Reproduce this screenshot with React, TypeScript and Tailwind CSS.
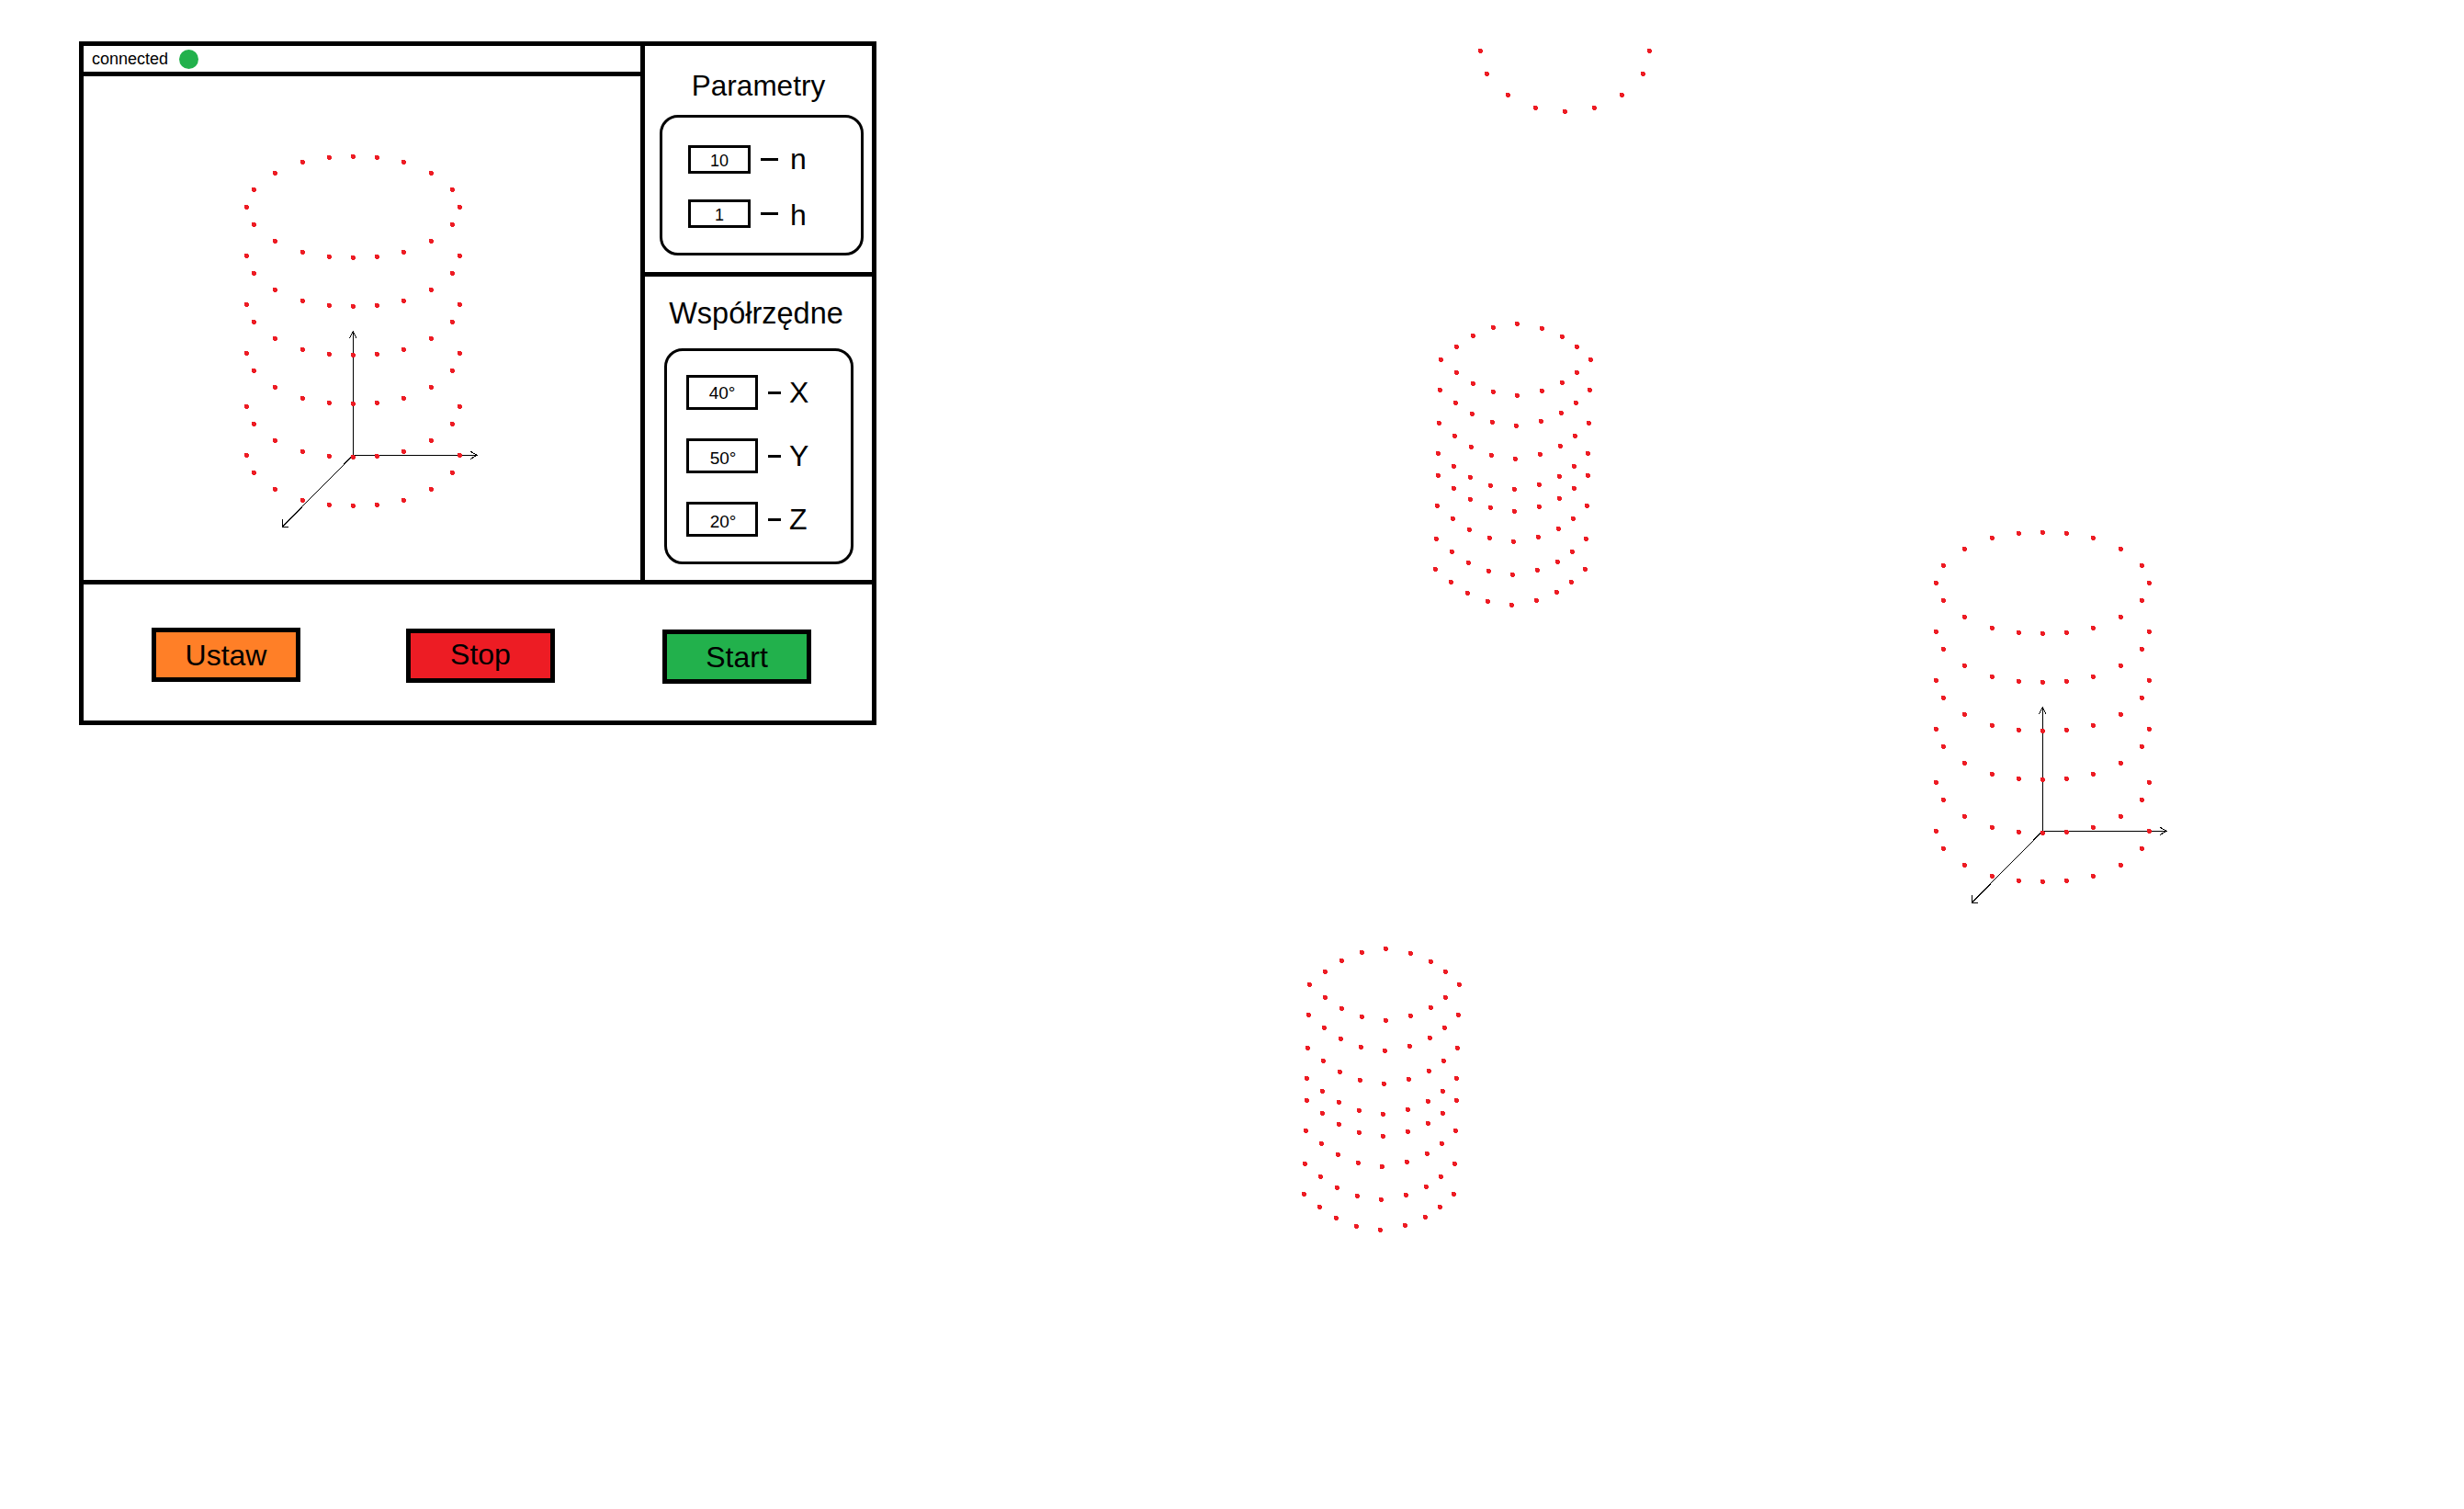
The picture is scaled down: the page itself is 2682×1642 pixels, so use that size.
const RED = "#ed1c24";

// lower half of a ring, measured from its leftmost dot
const LOWER: [number, number][] = [
  [0, 0], [17, 14], [35, 26], [57, 35], [83, 39], [110, 34], [132, 25], [148, 14], [163, 0],
];
const UPPER: [number, number][] = [
  [17, -14], [35, -26], [57, -35], [83, -39], [110, -34], [132, -25], [148, -14],
];
const TILT_RINGS: [number, number][] = [
  [0, 0], [-1, 33], [-2, 69], [-3, 102], [-3, 126], [-4, 159], [-5, 195], [-6, 228],
];

// straight cylinder with 20 dots per ring
const STRAIGHT_X = [-116, -108, -85, -55, -26, 0, 26, 55, 85, 108, 116];
const STRAIGHT_Y = [0, 19, 37, 49, 54, 55, 54, 49, 37, 19, 0];
const STRAIGHT_UP_X = [-108, -85, -55, -26, 0, 26, 55, 85, 108];
const STRAIGHT_UP_Y = [-19, -37, -49, -54, -55, -54, -49, -37, -19];
const STRAIGHT_RINGS = [0, 53, 106, 159, 217, 270];

const ARC: [number, number][] = [
  [1611.3, 55.3], [1618.3, 80.3], [1641.3, 103.3], [1671.3, 117.3], [1703.3, 121.3],
  [1735.3, 117.3], [1765.3, 103.3], [1788.3, 80.3], [1795.3, 55.3],
];

function Dot({ x, y }: { x: number; y: number }) {
  return <circle cx={x} cy={y} r={2.7} fill={RED} shapeRendering="crispEdges" />;
}

function Axes({ x, y }: { x: number; y: number }) {
  return (
    <g fill="none" stroke="#000" strokeWidth={1} shapeRendering="crispEdges">
      <path d={`M${x} ${y}V${y - 135}M${x - 4} ${y - 127}L${x} ${y - 135}L${x + 4} ${y - 127}`} />
      <path d={`M${x} ${y}H${x + 135}M${x + 128} ${y - 4}L${x + 135} ${y}L${x + 128} ${y + 4}`} />
      <path d={`M${x} ${y}L${x - 77} ${y + 78}M${x - 77} ${y + 70}V${y + 78}H${x - 70}`} />
    </g>
  );
}

function StraightCylinder({ x, y }: { x: number; y: number }) {
  return (
    <g>
      <Axes x={x} y={y + 270} />
      {STRAIGHT_UP_X.map((dx, i) => (
        <Dot key={`u${i}`} x={x + dx} y={y + STRAIGHT_UP_Y[i]} />
      ))}
      {STRAIGHT_RINGS.map((ring) =>
        STRAIGHT_X.map((dx, i) => <Dot key={`${ring}-${i}`} x={x + dx} y={y + ring + STRAIGHT_Y[i]} />)
      )}
    </g>
  );
}

function TiltedCylinder({ x, y }: { x: number; y: number }) {
  return (
    <g>
      {UPPER.map(([dx, dy], i) => (
        <Dot key={`u${i}`} x={x + dx} y={y + dy} />
      ))}
      {TILT_RINGS.map(([rx, ry]) =>
        LOWER.map(([dx, dy], i) => <Dot key={`${ry}-${i}`} x={x + rx + dx} y={y + ry + dy} />)
      )}
    </g>
  );
}

function Field({
  value,
  name,
  wide,
  valueClass = "",
  nameClass = "",
}: {
  value: string;
  name: string;
  wide?: boolean;
  valueClass?: string;
  nameClass?: string;
}) {
  return (
    <div className="flex items-center">
      <div
        className={`flex items-center justify-center border-[3px] border-black leading-none ${
          wide ? "h-[38px] w-[78px] text-[19px]" : "h-[31px] w-[68px] text-[18px]"
        } ${valueClass}`}
      >
        {value}
      </div>
      <div className={wide ? "ml-[11px] h-[3px] w-[14px] bg-black" : "ml-[11px] h-[3px] w-[19px] bg-black"} />
      <span className={`leading-none ${wide ? "ml-[9px] text-[32px]" : "ml-[13px] text-[32px]"} ${nameClass}`}>
        {name}
      </span>
    </div>
  );
}

function ActionButton({ label, color, className }: { label: string; color: string; className: string }) {
  return (
    <button
      type="button"
      className={`flex h-[59px] w-[162px] items-center justify-center border-[5px] border-black text-[32px] leading-none text-black ${color} ${className}`}
    >
      {label}
    </button>
  );
}

export default function App() {
  return (
    <div className="flex h-[1642px] w-[2682px] overflow-hidden bg-white font-['Liberation_Sans',Arial,sans-serif] text-black">
      <div className="mt-[45px] ml-[86px] flex h-[744px] w-[868px] shrink-0 flex-col self-start border-[5px] border-black">
        <div className="flex h-[581px]">
          {/* podgląd */}
          <div className="flex w-[611px] flex-col border-r-[5px] border-black">
            <div className="flex h-[33px] items-center border-b-[5px] border-black pl-[9px]">
              <span className="text-[18px] leading-none">connected</span>
              <span className="ml-[12px] h-[21px] w-[21px] rounded-full bg-[#22b14c]" />
            </div>
            <div className="flex-1">
              <svg className="block h-full w-full" viewBox="91 83 606 548">
                <StraightCylinder x={384.3} y={225.3} />
              </svg>
            </div>
          </div>

          {/* parametry i współrzędne */}
          <div className="flex w-[247px] flex-col">
            <div className="h-[251px] border-b-[5px] border-black pt-[25px]">
              <h2 className="h-[36px] text-center text-[31.5px] leading-[36px] font-normal">Parametry</h2>
              <div className="mt-[14px] ml-[16px] flex h-[153px] w-[222px] flex-col gap-[27px] rounded-[20px] border-[3px] border-black pt-[29px] pl-[28px]">
                <Field value="10" name="n" valueClass="pt-[4px]" />
                <Field value="1" name="h" valueClass="pt-[3px]" nameClass="translate-y-[2px]" />
              </div>
            </div>
            <div className="flex-1 pt-[22px]">
              <h2 className="h-[36px] pr-[5px] text-center text-[32.5px] leading-[36px] font-normal">Współrzędne</h2>
              <div className="mt-[20px] ml-[21px] flex h-[235px] w-[206px] flex-col gap-[31px] rounded-[20px] border-[3px] border-black pt-[26px] pl-[21px]">
                <Field wide value="40°" name="X" />
                <Field wide value="50°" name="Y" valueClass="pt-[4px] pl-[2px]" />
                <Field wide value="20°" name="Z" valueClass="pt-[4px] pl-[2px]" />
              </div>
            </div>
          </div>
        </div>

        <div className="flex flex-1 items-start border-t-[5px] border-black pl-[74px]">
          <ActionButton label="Ustaw" color="bg-[#ff7f27]" className="mt-[47px] pt-[1px]" />
          <ActionButton label="Stop" color="bg-[#ed1c24]" className="mt-[48px] ml-[115px] pb-[3px]" />
          <ActionButton label="Start" color="bg-[#22b14c]" className="mt-[49px] ml-[117px]" />
        </div>
      </div>

      {/* swobodny obszar z rzutami */}
      <svg className="block h-[1642px] flex-1" viewBox="954 0 1728 1642">
        {ARC.map(([x, y]) => (
          <Dot key={x} x={x} y={y} />
        ))}
        <TiltedCylinder x={1568.3} y={391.3} />
        <TiltedCylinder x={1425.3} y={1071.3} />
        <StraightCylinder x={2223.3} y={634.3} />
      </svg>
    </div>
  );
}
